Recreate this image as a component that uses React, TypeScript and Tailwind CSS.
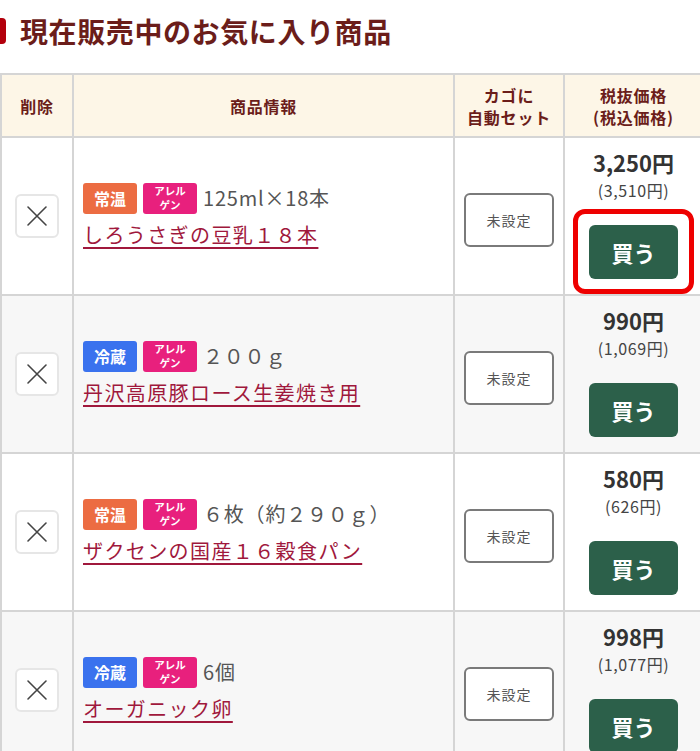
const items = [
  { temp: "常温", spec: "125ml×18本", name: "しろうさぎの豆乳１８本", price: "3,250円", tax: "(3,510円)", focus: true },
  { temp: "冷蔵", spec: "２００ｇ", name: "丹沢高原豚ロース生姜焼き用", price: "990円", tax: "(1,069円)" },
  { temp: "常温", spec: "６枚（約２９０ｇ）", name: "ザクセンの国産１６穀食パン", price: "580円", tax: "(626円)" },
  { temp: "冷蔵", spec: "6個", name: "オーガニック卵", price: "998円", tax: "(1,077円)" },
];

const XIcon = () => (
  <svg width="22" height="22" viewBox="0 0 22 22" fill="none" stroke="#444" strokeWidth="1.6" strokeLinecap="round">
    <path d="M2 2 L20 20 M20 2 L2 20" />
  </svg>
);

const App = () => {
  return (
    <div className="w-[700px] h-[751px] overflow-hidden bg-white font-['Noto_Sans_CJK_JP','Noto_Sans',sans-serif]">
      <div className="flex items-center h-[66px] pb-1">
        <div className="w-[6px] h-[26px] bg-[#b3000c] rounded-r-sm mr-[14px]"></div>
        <h1 className="text-[28px] font-bold text-[#6b1d1a] tracking-[0.6px]">現在販売中のお気に入り商品</h1>
      </div>
      <div className="mt-[7px] w-[700px] overflow-hidden">
        <table className="table-fixed border-collapse w-[702px]">
          <colgroup>
            <col className="w-[72px]" />
            <col className="w-[381px]" />
            <col className="w-[110px]" />
            <col className="w-[139px]" />
          </colgroup>
          <thead>
            <tr className="h-[63px] bg-[#fdf6e7] text-[#6b1d1a] text-[16px] font-bold leading-[22px] tracking-[0.8px]">
              <th className="border-2 border-[#d5d5d5]">削除</th>
              <th className="border-2 border-[#d5d5d5]">商品情報</th>
              <th className="border-2 border-[#d5d5d5]">カゴに<br />自動セット</th>
              <th className="border-2 border-[#d5d5d5]">税抜価格<br />(税込価格)</th>
            </tr>
          </thead>
          <tbody>
            {items.map((item, index) => (
              <tr key={index} className={`h-[158px] ${index % 2 === 1 ? "bg-[#f7f7f7]" : "bg-white"}`}>
                <td className="border-2 border-[#d5d5d5] align-middle">
                  <div className="flex justify-center">
                    <button className="w-[44px] h-[44px] bg-white border-2 border-[#e6e6e6] rounded-md flex items-center justify-center">
                      <XIcon />
                    </button>
                  </div>
                </td>
                <td className="border-2 border-[#d5d5d5] align-middle pl-[9px]">
                  <div className="flex items-center gap-[6px]">
                    <span className={`w-[54px] h-[31px] rounded-[3px] text-white text-[16px] font-bold flex items-center justify-center ${item.temp === "常温" ? "bg-[#ec6c42]" : "bg-[#3a72ee]"}`}>
                      {item.temp}
                    </span>
                    <span className="w-[54px] h-[31px] rounded-[3px] bg-[#e8207d] text-white text-[10.5px] font-bold leading-[14px] text-center pt-[1px]">
                      アレル<br />ゲン
                    </span>
                    <span className="text-[20px] text-[#555] tracking-[0.8px]">{item.spec}</span>
                  </div>
                  <a className="inline-block mt-[6px] text-[20px] text-[#a0183c] underline underline-offset-[4px] decoration-[1.5px] tracking-[1.4px]">
                    {item.name}
                  </a>
                </td>
                <td className="border-2 border-[#d5d5d5] align-middle">
                  <div className="flex justify-center pt-[8px]">
                    <button className="w-[90px] h-[54px] border-2 border-[#7a7a7a] rounded-md bg-white text-[14px] text-[#555] tracking-[1px]">
                      未設定
                    </button>
                  </div>
                </td>
                <td className="border-2 border-[#d5d5d5] align-middle">
                  <div className="flex flex-col items-center pb-[5px]">
                    <div className="text-[22px] font-bold text-[#333] leading-[28px]">{item.price}</div>
                    <div className="mt-[2px] text-[16px] text-[#444] leading-[24px] tracking-[0.6px]">{item.tax}</div>
                    <div className="relative mt-[23px]">
                      <button className="w-[89px] h-[54px] rounded-md bg-[#2c604a] text-white text-[22px] font-bold">
                        買う
                      </button>
                      {item.focus && (
                        <div className="absolute -left-[16px] -top-[16px] -right-[16px] -bottom-[15px] border-[5px] border-[#ee0000] rounded-[12px]"></div>
                      )}
                    </div>
                  </div>
                </td>
              </tr>
            ))}
          </tbody>
        </table>
      </div>
    </div>
  );
};

export default App;
